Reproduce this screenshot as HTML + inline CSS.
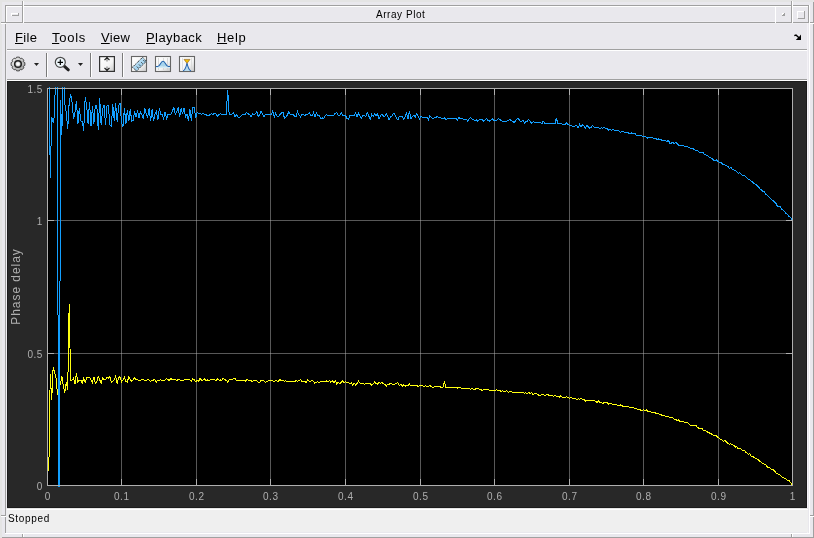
<!DOCTYPE html>
<html><head><meta charset="utf-8"><style>
html,body{margin:0;padding:0;-webkit-font-smoothing:antialiased;width:814px;height:538px;overflow:hidden;background:#e4e4e4;}
.mi{position:absolute;top:29px;height:18px;font:13px 'Liberation Sans',sans-serif;color:#000;line-height:18px;white-space:nowrap;}
.u{text-decoration:underline;}
div,svg{will-change:transform;}
</style></head><body>
<div style="position:absolute;left:2px;top:2px;width:812px;height:536px;background:#e9e8ed;"></div>
<div style="position:absolute;left:813px;top:2px;width:1px;height:536px;background:#a0a0a0;"></div>
<div style="position:absolute;left:2px;top:537px;width:812px;height:1px;background:#a0a0a0;"></div>
<div style="position:absolute;left:5px;top:5px;width:804px;height:1px;background:#a0a0a0;"></div>
<div style="position:absolute;left:5px;top:5px;width:1px;height:529px;background:#a0a0a0;"></div>
<div style="position:absolute;left:6px;top:6px;width:802px;height:1px;background:#ffffff;"></div>
<div style="position:absolute;left:6px;top:6px;width:1px;height:17px;background:#ffffff;"></div>
<div style="position:absolute;left:6px;top:23px;width:1px;height:510px;background:#eeedf1;"></div>
<div style="position:absolute;left:809px;top:5px;width:1px;height:529px;background:#ffffff;"></div>
<div style="position:absolute;left:5px;top:533px;width:805px;height:1px;background:#ffffff;"></div>
<div style="position:absolute;left:808px;top:6px;width:1px;height:17px;background:#a0a0a0;"></div>
<div style="position:absolute;left:5px;top:22px;width:804px;height:1px;background:#a0a0a0;"></div>
<div style="position:absolute;left:7px;top:23px;width:801px;height:1px;background:#eeedf1;"></div>
<div style="position:absolute;left:7px;top:21px;width:768px;height:1px;background:#eeedf1;"></div>
<div style="position:absolute;left:807px;top:23px;width:1px;height:510px;background:#f4f2f7;"></div>
<div style="position:absolute;left:1px;top:22px;width:5px;height:1px;background:#a0a0a0;"></div>
<div style="position:absolute;left:1px;top:23px;width:5px;height:1px;background:#ffffff;"></div>
<div style="position:absolute;left:22px;top:1px;width:1px;height:22px;background:#a0a0a0;"></div>
<div style="position:absolute;left:23px;top:1px;width:1px;height:22px;background:#ffffff;"></div>
<div style="position:absolute;left:791px;top:1px;width:1px;height:22px;background:#a0a0a0;"></div>
<div style="position:absolute;left:792px;top:1px;width:1px;height:22px;background:#ffffff;"></div>
<div style="position:absolute;left:1px;top:515px;width:5px;height:1px;background:#a0a0a0;"></div>
<div style="position:absolute;left:1px;top:516px;width:5px;height:1px;background:#ffffff;"></div>
<div style="position:absolute;left:810px;top:515px;width:4px;height:1px;background:#a0a0a0;"></div>
<div style="position:absolute;left:810px;top:516px;width:4px;height:1px;background:#ffffff;"></div>
<div style="position:absolute;left:22px;top:534px;width:1px;height:4px;background:#a0a0a0;"></div>
<div style="position:absolute;left:23px;top:534px;width:1px;height:3px;background:#ffffff;"></div>
<div style="position:absolute;left:791px;top:534px;width:1px;height:4px;background:#a0a0a0;"></div>
<div style="position:absolute;left:792px;top:534px;width:1px;height:3px;background:#ffffff;"></div>
<div style="position:absolute;left:810px;top:22px;width:4px;height:1px;background:#a0a0a0;"></div>
<div style="position:absolute;left:810px;top:23px;width:4px;height:1px;background:#ffffff;"></div>
<div style="position:absolute;left:775px;top:6px;width:1px;height:17px;background:#ffffff;"></div>
<div style="position:absolute;left:11px;top:13px;width:7px;height:1px;background:#ffffff;"></div>
<div style="position:absolute;left:11px;top:13px;width:1px;height:3px;background:#ffffff;"></div>
<div style="position:absolute;left:12px;top:15px;width:7px;height:1px;background:#a0a0a0;"></div>
<div style="position:absolute;left:18px;top:13px;width:1px;height:3px;background:#a0a0a0;"></div>
<div style="position:absolute;left:782px;top:13px;width:2px;height:1px;background:#ffffff;"></div>
<div style="position:absolute;left:782px;top:13px;width:1px;height:2px;background:#ffffff;"></div>
<div style="position:absolute;left:783px;top:14px;width:1px;height:1px;background:#a0a0a0;"></div>
<div style="position:absolute;left:782px;top:15px;width:2px;height:1px;background:#a0a0a0;"></div>
<div style="position:absolute;left:784px;top:13px;width:1px;height:3px;background:#a0a0a0;"></div>
<div style="position:absolute;left:797px;top:11px;width:7px;height:1px;background:#ffffff;"></div>
<div style="position:absolute;left:797px;top:11px;width:1px;height:7px;background:#ffffff;"></div>
<div style="position:absolute;left:798px;top:18px;width:7px;height:1px;background:#a0a0a0;"></div>
<div style="position:absolute;left:804px;top:11px;width:1px;height:8px;background:#a0a0a0;"></div>
<div style="position:absolute;left:376px;top:5.5px;font:10px 'Liberation Sans',sans-serif;color:#000;line-height:17px;letter-spacing:0.55px;white-space:nowrap">Array Plot</div>
<div style="position:absolute;left:7px;top:49px;width:800px;height:1px;background:#a0a0a0;"></div>
<div style="position:absolute;left:7px;top:50px;width:800px;height:1px;background:#ffffff;"></div>
<div style="position:absolute;left:7px;top:79px;width:800px;height:1px;background:#a0a0a0;"></div>
<div style="position:absolute;left:7px;top:80px;width:800px;height:1px;background:#ffffff;"></div>
<div class="mi" style="left:15px;letter-spacing:0.3px"><span class="u">F</span>ile</div>
<div class="mi" style="left:52px;letter-spacing:0.75px"><span class="u">T</span>ools</div>
<div class="mi" style="left:101px;letter-spacing:0.3px"><span class="u">V</span>iew</div>
<div class="mi" style="left:146px;letter-spacing:0.43px"><span class="u">P</span>layback</div>
<div class="mi" style="left:217px;letter-spacing:0.67px"><span class="u">H</span>elp</div>
<div style="position:absolute;left:7px;top:81px;width:800px;height:427px;background:#1c1c1c;"></div>
<div style="position:absolute;left:8px;top:82px;width:798px;height:425px;background:#282828;"></div>
<div style="position:absolute;left:7px;top:508px;width:801px;height:1px;background:#e4e4e4;"></div>
<div style="position:absolute;left:7px;top:509px;width:801px;height:1px;background:#ffffff;"></div>
<div style="position:absolute;left:7px;top:510px;width:801px;height:22px;background:#efefef;"></div>
<div style="position:absolute;left:8.4px;top:511.5px;font:10px 'Liberation Sans',sans-serif;color:#000;letter-spacing:0.68px;line-height:14px;white-space:nowrap">Stopped</div>
<div style="position:absolute;left:46px;top:53px;width:1px;height:24px;background:#7a7a7a;"></div>
<div style="position:absolute;left:47px;top:53px;width:1px;height:24px;background:#ffffff;"></div>
<div style="position:absolute;left:90px;top:53px;width:1px;height:24px;background:#7a7a7a;"></div>
<div style="position:absolute;left:91px;top:53px;width:1px;height:24px;background:#ffffff;"></div>
<div style="position:absolute;left:122px;top:53px;width:1px;height:24px;background:#7a7a7a;"></div>
<div style="position:absolute;left:123px;top:53px;width:1px;height:24px;background:#ffffff;"></div>

<svg width="814" height="538" style="position:absolute;left:0;top:0">
<defs>
<linearGradient id="gg" x1="0" y1="0" x2="1" y2="1"><stop offset="0" stop-color="#f4f4f4"/><stop offset="1" stop-color="#9a9a9a"/></linearGradient>
<linearGradient id="bx" x1="0" y1="0" x2="1" y2="1"><stop offset="0" stop-color="#ffffff"/><stop offset="0.6" stop-color="#f4f4f4"/><stop offset="1" stop-color="#c8c8c8"/></linearGradient>
<linearGradient id="bl" x1="0" y1="0" x2="1" y2="1"><stop offset="0" stop-color="#d8eef8"/><stop offset="1" stop-color="#7fbfe6"/></linearGradient>
</defs>
<path d="M794.3,35.6 L796,35 L799.5,38.3" fill="none" stroke="#000" stroke-width="1.5"/><path d="M801,34.6 L801,40 L795.8,40 L797.5,38.3 L799.4,36.4 Z" fill="#000"/>
<!-- gear -->
<g transform="translate(18,64)">
<path d="M-2.08,-5.52 L-1.39,-6.86 L1.39,-6.86 L2.08,-5.52 L2.43,-5.37 L3.87,-5.83 L5.83,-3.87 L5.37,-2.43 L5.52,-2.08 L6.86,-1.39 L6.86,1.39 L5.52,2.08 L5.37,2.43 L5.83,3.87 L3.87,5.83 L2.43,5.37 L2.08,5.52 L1.39,6.86 L-1.39,6.86 L-2.08,5.52 L-2.43,5.37 L-3.87,5.83 L-5.83,3.87 L-5.37,2.43 L-5.52,2.08 L-6.86,1.39 L-6.86,-1.39 L-5.52,-2.08 L-5.37,-2.43 L-5.83,-3.87 L-3.87,-5.83 L-2.43,-5.37 Z" fill="url(#gg)" stroke="#3a3a3a" stroke-width="0.9"/>
<circle r="3.3" fill="none" stroke="#222" stroke-width="1.5"/>
<circle r="1.8" fill="#fff"/>
</g>
<path d="M34,63 L39,63 L36.5,66 Z" fill="#222"/>
<!-- zoom -->
<line x1="64.2" y1="66.2" x2="68.3" y2="69.8" stroke="#222" stroke-width="3" stroke-linecap="round"/>
<circle cx="60.3" cy="62.3" r="5" fill="#f0f8fc" stroke="#4a4a4a" stroke-width="1.2"/>
<path d="M57.6,62.3 H63 M60.3,59.6 V65" stroke="#000" stroke-width="1.2"/>
<path d="M78,63 L83,63 L80.5,66 Z" fill="#222"/>
<!-- autoscale -->
<rect x="99.6" y="56.6" width="14.8" height="14.8" fill="url(#bx)" stroke="#333" stroke-width="1.2"/>
<path d="M104.5,60 L107,57.8 L109.5,60" fill="none" stroke="#222" stroke-width="1.2"/>
<path d="M107,57 V59" stroke="#222" stroke-width="1.2"/><path d="M107,59 V61.5" stroke="#888" stroke-width="1.2"/>
<path d="M104.5,68 L107,70.2 L109.5,68" fill="none" stroke="#222" stroke-width="1.2"/>
<path d="M107,69 V71" stroke="#222" stroke-width="1.2"/><path d="M107,66.5 V69" stroke="#888" stroke-width="1.2"/>
<!-- ruler -->
<rect x="131.5" y="56.5" width="15" height="15" fill="url(#bx)" stroke="#666" stroke-width="1.1"/>
<path d="M132.5,67.2 L142.6,57.3 L146.4,61.2 L136.5,71 Z" fill="url(#bl)" stroke="#111" stroke-width="1" stroke-dasharray="1.1,0.9"/><path d="M139,64.5 L140.3,65.8 M141.3,62.3 L142.6,63.6 M136.9,66.6 L138.2,67.9 M143.4,60.2 L144.7,61.5" stroke="#222" stroke-width="0.9"/>
<!-- bell -->
<rect x="155.5" y="56.5" width="15" height="15" fill="url(#bx)" stroke="#666" stroke-width="1.1"/>
<path d="M158.5,58 V70 M163.5,58 V70 M167.5,58 V70" stroke="#d0d0d0" stroke-width="0.8"/>
<rect x="156" y="66.5" width="14" height="1.5" fill="#d4ebf6"/>
<path d="M156,66.5 L157.6,66.5 C160,66.5 160.6,61.3 163,61.3 C165.4,61.3 166,66.5 168.4,66.5 L170,66.5 Z" fill="#a8d4ec"/>
<path d="M156,66.5 L157.6,66.5 C160,66.5 160.6,61.3 163,61.3 C165.4,61.3 166,66.5 168.4,66.5 L170,66.5" fill="none" stroke="#2262ad" stroke-width="1.1"/>
<!-- peak -->
<rect x="179.5" y="56.5" width="15" height="15" fill="url(#bx)" stroke="#666" stroke-width="1.1"/>
<path d="M182.5,58 V70 M191.5,58 V70" stroke="#d8d8d8" stroke-width="0.8"/>
<path d="M187,63 C186,68 185,70 183,71 L191,71 C189,70 188,68 187,63 Z" fill="#b8dcee"/>
<path d="M187,63 C186,68 185,70 183,71 M187,63 C188,68 189,70 191,71" fill="none" stroke="#2a66b0" stroke-width="1.1"/>
<path d="M184,59.4 L190,59.4 L187,63.3 Z" fill="#f2c000" stroke="#9a6a2a" stroke-width="0.7"/>
</svg>

<svg width="814" height="538" style="position:absolute;left:0;top:0"><defs><clipPath id="ax"><rect x="47" y="87" width="746" height="400"/></clipPath></defs><rect x="47" y="88" width="746" height="398" fill="#000"/><path d="M121.5,89 V485 M196.5,89 V485 M270.5,89 V485 M345.5,89 V485 M420.5,89 V485 M494.5,89 V485 M569.5,89 V485 M643.5,89 V485 M718.5,89 V485" stroke="#afafaf" stroke-opacity="0.5" stroke-width="1" shape-rendering="crispEdges"/><path d="M48,353.5 H792 M48,220.5 H792" stroke="#afafaf" stroke-opacity="0.5" stroke-width="1" shape-rendering="crispEdges"/><path d="M121.5,479 V485 M121.5,89 V95 M196.5,479 V485 M196.5,89 V95 M270.5,479 V485 M270.5,89 V95 M345.5,479 V485 M345.5,89 V95 M420.5,479 V485 M420.5,89 V95 M494.5,479 V485 M494.5,89 V95 M569.5,479 V485 M569.5,89 V95 M643.5,479 V485 M643.5,89 V95 M718.5,479 V485 M718.5,89 V95 M48,353.5 H54 M786,353.5 H792 M48,220.5 H54 M786,220.5 H792" stroke="#afafaf" stroke-width="1" shape-rendering="crispEdges"/><g clip-path="url(#ax)" fill="none" stroke-width="1" shape-rendering="crispEdges"><polyline points="48.80,471.0 50.25,374.0 51.71,400.0 53.16,367.0 54.62,373.0 56.07,378.0 57.53,395.0 58.98,384.0 60.44,384.0 61.89,376.0 63.34,386.0 64.80,393.0 66.25,382.0 67.71,390.0 69.16,304.0 70.62,380.0 72.07,380.0 73.52,378.0 74.98,384.0 76.43,373.0 77.89,382.0 79.34,380.0 80.80,380.2 82.25,383.0 83.71,378.3 85.16,382.2 86.61,377.9 88.07,377.6 89.52,377.3 90.98,380.1 92.43,382.5 93.89,376.8 95.34,383.6 96.80,381.8 98.25,376.6 99.70,379.6 101.16,383.5 102.61,377.7 104.07,379.8 105.52,379.8 106.98,377.3 108.43,378.4 109.88,376.5 111.34,382.4 112.79,381.6 114.25,379.6 115.70,376.2 117.16,383.7 118.61,377.2 120.07,376.9 121.52,381.8 122.97,380.1 124.43,377.4 125.88,381.7 127.34,382.0 128.79,376.7 130.25,379.7 131.70,381.2 133.16,379.7 134.61,377.8 136.06,379.6 137.52,379.6 138.97,380.3 140.43,380.1 141.88,379.7 143.34,379.6 144.79,380.8 146.25,380.2 147.70,379.9 149.15,379.9 150.61,381.3 152.06,380.3 153.52,380.0 154.97,379.9 156.43,382.0 157.88,380.1 159.33,380.1 160.79,379.9 162.24,380.8 163.70,380.2 165.15,380.0 166.61,378.5 168.06,379.9 169.52,380.3 170.97,378.1 172.42,379.9 173.88,379.6 175.33,379.7 176.79,380.3 178.24,379.6 179.70,380.0 181.15,380.0 182.61,380.2 184.06,379.9 185.51,379.7 186.97,379.9 188.42,379.7 189.88,379.9 191.33,381.3 192.79,378.6 194.24,379.9 195.69,381.8 197.15,380.0 198.60,381.4 200.06,378.1 201.51,380.1 202.97,380.1 204.42,378.8 205.88,380.3 207.33,380.0 208.78,381.0 210.24,379.9 211.69,379.9 213.15,379.9 214.60,379.8 216.06,381.3 217.51,378.6 218.97,380.2 220.42,380.0 221.87,380.4 223.33,378.1 224.78,379.8 226.24,380.2 227.69,382.3 229.15,379.9 230.60,379.1 232.05,380.0 233.51,378.3 234.96,378.5 236.42,380.3 237.87,380.4 239.33,380.0 240.78,380.3 242.24,380.2 243.69,380.3 245.14,381.2 246.60,379.9 248.05,380.0 249.51,380.3 250.96,380.6 252.42,381.8 253.87,380.5 255.33,380.3 256.78,380.8 258.23,382.1 259.69,382.2 261.14,380.3 262.60,380.5 264.05,380.8 265.51,382.2 266.96,381.8 268.41,380.6 269.87,380.3 271.32,380.5 272.78,380.9 274.23,382.0 275.69,380.5 277.14,381.1 278.60,381.0 280.05,379.6 281.50,380.9 282.96,380.5 284.41,381.2 285.87,380.6 287.32,382.0 288.78,381.1 290.23,381.2 291.69,381.1 293.14,381.2 294.59,381.2 296.05,380.9 297.50,381.2 298.96,380.9 300.41,379.4 301.87,381.4 303.32,381.6 304.77,381.4 306.23,382.8 307.68,379.8 309.14,381.2 310.59,381.2 312.05,380.0 313.50,381.6 314.96,383.3 316.41,382.1 317.86,381.7 319.32,382.9 320.77,381.1 322.23,381.6 323.68,381.6 325.14,381.7 326.59,380.9 328.05,381.8 329.50,380.4 330.95,382.4 332.41,380.5 333.86,382.6 335.32,380.5 336.77,384.1 338.23,382.1 339.68,383.5 341.14,382.5 342.59,381.0 344.04,382.8 345.50,381.4 346.95,382.8 348.41,382.7 349.86,383.2 351.32,382.9 352.77,385.1 354.22,383.2 355.68,385.2 357.13,383.2 358.59,381.1 360.04,383.3 361.50,383.5 362.95,383.1 364.41,384.7 365.86,383.6 367.31,383.1 368.77,383.7 370.22,383.6 371.68,385.5 373.13,384.0 374.59,382.1 376.04,383.5 377.50,384.1 378.95,382.1 380.40,383.7 381.86,382.1 383.31,383.7 384.77,384.3 386.22,386.2 387.68,384.2 389.13,384.3 390.58,383.2 392.04,384.2 393.49,384.3 394.95,384.1 396.40,383.2 397.86,382.6 399.31,385.8 400.77,384.2 402.22,386.7 403.67,384.8 405.13,386.2 406.58,385.1 408.04,385.3 409.49,384.0 410.95,386.0 412.40,385.5 413.86,385.7 415.31,385.1 416.76,385.4 418.22,386.7 419.67,385.8 421.13,385.9 422.58,385.8 424.04,387.1 425.49,385.4 426.94,386.5 428.40,386.5 429.85,385.3 431.31,386.8 432.76,387.5 434.22,386.7 435.67,386.7 437.13,386.4 438.58,386.6 440.03,386.4 441.49,387.9 442.94,387.7 444.40,381.0 445.85,387.6 447.31,387.1 448.76,387.1 450.22,387.8 451.67,387.6 453.12,388.0 454.58,387.9 456.03,387.4 457.49,388.0 458.94,387.4 460.40,387.9 461.85,388.5 463.30,388.1 464.76,388.3 466.21,388.2 467.67,388.3 469.12,388.8 470.58,389.4 472.03,388.7 473.49,389.4 474.94,389.4 476.39,388.1 477.85,388.6 479.30,389.0 480.76,389.4 482.21,390.7 483.67,389.5 485.12,390.1 486.58,389.4 488.03,389.1 489.48,390.6 490.94,390.3 492.39,390.1 493.85,390.7 495.30,390.7 496.76,389.7 498.21,391.0 499.66,390.3 501.12,391.4 502.57,390.8 504.03,391.3 505.48,391.2 506.94,390.8 508.39,392.5 509.85,391.0 511.30,391.6 512.75,392.3 514.21,392.0 515.66,392.2 517.12,392.0 518.57,392.9 520.03,392.6 521.48,392.8 522.94,392.3 524.39,393.6 525.84,392.7 527.30,393.8 528.75,392.5 530.21,393.7 531.66,392.7 533.12,394.6 534.57,393.7 536.03,393.5 537.48,394.5 538.93,395.3 540.39,395.6 541.84,394.5 543.30,394.8 544.75,395.2 546.21,394.9 547.66,394.4 549.11,395.6 550.57,395.8 552.02,395.3 553.48,396.2 554.93,395.8 556.39,396.2 557.84,396.3 559.30,397.3 560.75,395.5 562.20,397.2 563.66,397.2 565.11,397.5 566.57,396.7 568.02,397.4 569.48,398.1 570.93,397.7 572.39,398.1 573.84,398.1 575.29,398.6 576.75,399.9 578.20,398.7 579.66,399.1 581.11,398.8 582.57,399.4 584.02,399.5 585.47,401.0 586.93,400.2 588.38,400.1 589.84,400.5 591.29,400.8 592.75,400.8 594.20,400.3 595.66,401.4 597.11,402.7 598.56,401.0 600.02,402.4 601.47,402.5 602.93,403.6 604.38,402.4 605.84,402.9 607.29,402.9 608.75,404.4 610.20,403.0 611.65,404.0 613.11,404.4 614.56,404.6 616.02,404.9 617.47,405.1 618.93,405.5 620.38,405.0 621.83,405.8 623.29,406.3 624.74,406.2 626.20,406.8 627.65,406.7 629.11,407.0 630.56,407.2 632.02,407.7 633.47,407.8 634.92,408.5 636.38,408.5 637.83,409.4 639.29,409.2 640.74,410.2 642.20,410.1 643.65,409.9 645.11,410.8 646.56,410.0 648.01,411.5 649.47,411.6 650.92,411.9 652.38,412.4 653.83,412.6 655.29,412.9 656.74,413.6 658.19,413.6 659.65,414.2 661.10,414.8 662.56,415.5 664.01,415.5 665.47,416.4 666.92,416.5 668.38,416.7 669.83,417.8 671.28,417.9 672.74,417.4 674.19,419.2 675.65,419.2 677.10,420.6 678.56,420.0 680.01,421.7 681.47,421.7 682.92,421.4 684.37,422.5 685.83,423.0 687.28,422.2 688.74,424.0 690.19,425.2 691.65,425.0 693.10,425.8 694.55,425.9 696.01,425.6 697.46,427.8 698.92,428.1 700.37,428.8 701.83,428.2 703.28,430.1 704.74,430.4 706.19,431.1 707.64,432.2 709.10,432.9 710.55,433.3 712.01,434.5 713.46,435.2 714.92,435.8 716.37,435.7 717.83,437.8 719.28,438.1 720.73,439.4 722.19,440.1 723.64,441.5 725.10,440.1 726.55,442.2 728.01,443.4 729.46,444.1 730.92,443.9 732.37,444.8 733.82,445.3 735.28,447.1 736.73,446.6 738.19,448.9 739.64,448.5 741.10,449.2 742.55,450.7 744.00,450.1 745.46,451.8 746.91,453.1 748.37,454.2 749.82,453.9 751.28,456.1 752.73,456.3 754.19,457.5 755.64,458.2 757.09,459.1 758.55,460.0 760.00,461.4 761.46,462.5 762.91,463.4 764.37,464.2 765.82,465.0 767.28,467.0 768.73,467.0 770.18,468.3 771.64,469.2 773.09,469.8 774.55,470.8 776.00,472.8 777.46,473.8 778.91,474.3 780.36,475.2 781.82,476.8 783.27,477.6 784.73,478.9 786.18,479.0 787.64,480.5 789.09,480.8 790.55,482.4 792.00,484.4" stroke="#ffff11"/><polyline points="48.80,40.0 50.25,178.0 51.71,117.0 53.16,123.0 54.62,115.0 56.07,40.0 57.53,110.0 58.98,725.0 60.44,100.0 61.89,135.0 63.34,40.0 64.80,104.0 66.25,112.0 67.71,129.0 69.16,103.0 70.62,94.0 72.07,102.0 73.52,119.0 74.98,112.0 76.43,100.9 77.89,124.0 79.34,107.7 80.80,121.0 82.25,121.4 83.71,130.5 85.16,97.4 86.61,105.0 88.07,123.5 89.52,101.8 90.98,126.2 92.43,106.0 93.89,123.7 95.34,105.0 96.80,105.6 98.25,129.9 99.70,97.6 101.16,125.3 102.61,109.5 104.07,105.0 105.52,124.8 106.98,106.0 108.43,105.9 109.88,124.9 111.34,126.0 112.79,104.3 114.25,120.5 115.70,103.4 117.16,122.3 118.61,106.2 120.07,103.0 121.52,122.6 122.97,127.1 124.43,108.0 125.88,124.0 127.34,110.1 128.79,121.3 130.25,109.2 131.70,121.0 133.16,120.5 134.61,111.5 136.06,117.2 137.52,110.4 138.97,117.6 140.43,111.9 141.88,114.5 143.34,118.4 144.79,108.1 146.25,114.3 147.70,117.3 149.15,108.1 150.61,121.1 152.06,109.4 153.52,121.2 154.97,114.4 156.43,111.1 157.88,120.3 159.33,108.1 160.79,114.5 162.24,114.5 163.70,119.0 165.15,111.6 166.61,119.8 168.06,114.1 169.52,114.5 170.97,114.0 172.42,110.8 173.88,107.6 175.33,114.1 176.79,111.2 178.24,108.1 179.70,117.3 181.15,108.0 182.61,114.0 184.06,108.3 185.51,117.2 186.97,114.3 188.42,120.9 189.88,109.1 191.33,120.9 192.79,107.3 194.24,107.8 195.69,117.8 197.15,112.1 198.60,113.7 200.06,113.9 201.51,114.1 202.97,113.9 204.42,114.0 205.88,114.0 207.33,115.7 208.78,115.7 210.24,114.2 211.69,113.9 213.15,114.1 214.60,113.7 216.06,113.8 217.51,116.5 218.97,114.3 220.42,114.0 221.87,114.1 223.33,114.2 224.78,114.1 226.24,114.5 227.69,90.0 229.15,113.9 230.60,114.5 232.05,113.9 233.51,112.7 234.96,117.0 236.42,114.5 237.87,117.0 239.33,117.7 240.78,116.4 242.24,114.6 243.69,114.0 245.14,114.3 246.60,112.3 248.05,113.9 249.51,114.3 250.96,117.0 252.42,114.0 253.87,114.6 255.33,114.0 256.78,111.3 258.23,116.6 259.69,114.7 261.14,111.0 262.60,114.6 264.05,117.3 265.51,114.1 266.96,114.6 268.41,114.2 269.87,114.2 271.32,114.5 272.78,111.1 274.23,117.0 275.69,112.9 277.14,116.6 278.60,116.5 280.05,114.3 281.50,112.8 282.96,112.1 284.41,118.1 285.87,116.9 287.32,115.0 288.78,111.8 290.23,114.6 291.69,114.9 293.14,114.7 294.59,116.3 296.05,116.7 297.50,111.6 298.96,115.0 300.41,116.8 301.87,114.6 303.32,114.7 304.77,115.3 306.23,114.7 307.68,114.8 309.14,112.8 310.59,115.0 312.05,116.3 313.50,112.8 314.96,117.0 316.41,112.6 317.86,115.2 319.32,115.4 320.77,118.7 322.23,117.9 323.68,118.5 325.14,115.4 326.59,114.9 328.05,115.2 329.50,115.5 330.95,115.4 332.41,115.5 333.86,115.1 335.32,113.2 336.77,112.8 338.23,115.5 339.68,115.4 341.14,112.4 342.59,115.5 344.04,115.1 345.50,115.3 346.95,118.5 348.41,119.1 349.86,115.5 351.32,115.8 352.77,115.7 354.22,115.3 355.68,112.7 357.13,117.0 358.59,112.9 360.04,115.9 361.50,118.2 362.95,115.5 364.41,115.6 365.86,116.3 367.31,112.8 368.77,115.9 370.22,119.5 371.68,114.4 373.13,116.4 374.59,113.6 376.04,116.3 377.50,113.8 378.95,118.6 380.40,116.0 381.86,114.2 383.31,115.9 384.77,116.6 386.22,113.4 387.68,116.2 389.13,120.0 390.58,116.3 392.04,116.2 393.49,113.2 394.95,114.6 396.40,118.2 397.86,119.8 399.31,116.6 400.77,116.9 402.22,116.7 403.67,118.9 405.13,116.7 406.58,113.2 408.04,118.7 409.49,110.8 410.95,118.7 412.40,116.7 413.86,115.1 415.31,116.9 416.76,113.3 418.22,116.7 419.67,119.0 421.13,115.9 422.58,117.4 424.04,117.1 425.49,117.2 426.94,117.1 428.40,119.5 429.85,115.7 431.31,117.2 432.76,118.9 434.22,117.9 435.67,118.0 437.13,115.9 438.58,117.8 440.03,117.5 441.49,118.3 442.94,118.3 444.40,117.9 445.85,119.7 447.31,118.6 448.76,118.4 450.22,118.3 451.67,118.1 453.12,118.3 454.58,118.7 456.03,118.4 457.49,120.5 458.94,117.3 460.40,118.8 461.85,118.2 463.30,119.0 464.76,119.2 466.21,119.1 467.67,121.3 469.12,119.1 470.58,117.6 472.03,119.2 473.49,119.8 474.94,120.8 476.39,119.7 477.85,121.5 479.30,119.5 480.76,119.6 482.21,119.6 483.67,121.1 485.12,119.9 486.58,118.6 488.03,120.4 489.48,121.2 490.94,119.9 492.39,118.9 493.85,120.6 495.30,120.7 496.76,120.3 498.21,118.6 499.66,119.2 501.12,120.4 502.57,121.8 504.03,121.0 505.48,121.7 506.94,121.0 508.39,120.7 509.85,119.5 511.30,120.6 512.75,121.2 514.21,122.9 515.66,120.6 517.12,118.9 518.57,119.0 520.03,121.0 521.48,121.3 522.94,120.0 524.39,123.2 525.84,121.5 527.30,121.1 528.75,119.4 530.21,121.6 531.66,123.2 533.12,121.6 534.57,122.2 536.03,122.3 537.48,122.1 538.93,122.2 540.39,122.1 541.84,123.7 543.30,121.1 544.75,123.2 546.21,123.3 547.66,123.9 549.11,123.3 550.57,123.1 552.02,123.5 553.48,123.7 554.93,123.8 556.39,118.0 557.84,123.8 559.30,123.8 560.75,123.2 562.20,124.4 563.66,124.4 565.11,124.6 566.57,123.1 568.02,124.6 569.48,125.3 570.93,125.5 572.39,126.2 573.84,127.0 575.29,125.5 576.75,125.7 578.20,127.9 579.66,124.3 581.11,127.0 582.57,124.6 584.02,126.1 585.47,128.2 586.93,125.5 588.38,126.8 589.84,128.2 591.29,127.1 592.75,125.4 594.20,127.1 595.66,127.8 597.11,127.7 598.56,127.7 600.02,128.4 601.47,127.9 602.93,128.1 604.38,127.7 605.84,128.7 607.29,128.9 608.75,130.1 610.20,129.7 611.65,130.4 613.11,129.6 614.56,130.2 616.02,130.1 617.47,131.0 618.93,130.8 620.38,132.6 621.83,131.2 623.29,131.8 624.74,132.3 626.20,132.2 627.65,132.6 629.11,133.4 630.56,133.2 632.02,132.9 633.47,133.8 634.92,133.2 636.38,135.8 637.83,135.6 639.29,135.4 640.74,135.5 642.20,136.0 643.65,136.4 645.11,136.5 646.56,137.7 648.01,138.2 649.47,137.2 650.92,137.4 652.38,137.5 653.83,138.3 655.29,138.1 656.74,139.2 658.19,138.9 659.65,139.5 661.10,139.6 662.56,140.7 664.01,140.9 665.47,140.1 666.92,141.7 668.38,140.4 669.83,143.1 671.28,143.1 672.74,142.4 674.19,143.4 675.65,142.5 677.10,143.4 678.56,145.4 680.01,144.9 681.47,145.5 682.92,145.5 684.37,146.1 685.83,146.3 687.28,146.4 688.74,147.4 690.19,148.0 691.65,148.8 693.10,148.8 694.55,149.5 696.01,150.7 697.46,150.7 698.92,152.0 700.37,152.5 701.83,152.7 703.28,152.8 704.74,154.6 706.19,155.1 707.64,155.6 709.10,157.4 710.55,157.5 712.01,158.5 713.46,160.1 714.92,160.7 716.37,159.8 717.83,161.7 719.28,162.1 720.73,162.1 722.19,163.8 723.64,164.8 725.10,165.0 726.55,165.6 728.01,166.6 729.46,168.5 730.92,166.9 732.37,169.9 733.82,169.9 735.28,170.3 736.73,171.3 738.19,173.4 739.64,172.8 741.10,174.3 742.55,175.2 744.00,175.7 745.46,176.4 746.91,178.1 748.37,179.2 749.82,179.7 751.28,181.0 752.73,182.2 754.19,183.5 755.64,184.4 757.09,185.5 758.55,187.0 760.00,188.9 761.46,189.8 762.91,191.2 764.37,191.7 765.82,194.2 767.28,195.5 768.73,197.0 770.18,198.2 771.64,199.7 773.09,200.8 774.55,202.1 776.00,203.5 777.46,206.4 778.91,206.2 780.36,206.9 781.82,209.5 783.27,210.3 784.73,212.0 786.18,213.7 787.64,214.5 789.09,216.6 790.55,217.3 792.00,219.5" stroke="#139fff"/></g><rect x="47.5" y="88.5" width="745" height="397" fill="none" stroke="#afafaf" stroke-width="1" shape-rendering="crispEdges"/><g fill="#afafaf" style="font-family:'Liberation Sans',sans-serif;font-size:10px;letter-spacing:0.5px"><text x="42.8" y="490" text-anchor="end">0</text><text x="42.8" y="358" text-anchor="end">0.5</text><text x="42.8" y="225" text-anchor="end">1</text><text x="42.8" y="93" text-anchor="end">1.5</text><text x="47.75" y="500" text-anchor="middle">0</text><text x="121.75" y="500" text-anchor="middle">0.1</text><text x="196.75" y="500" text-anchor="middle">0.2</text><text x="270.75" y="500" text-anchor="middle">0.3</text><text x="345.75" y="500" text-anchor="middle">0.4</text><text x="420.75" y="500" text-anchor="middle">0.5</text><text x="494.75" y="500" text-anchor="middle">0.6</text><text x="569.75" y="500" text-anchor="middle">0.7</text><text x="643.75" y="500" text-anchor="middle">0.8</text><text x="718.75" y="500" text-anchor="middle">0.9</text><text x="792.75" y="500" text-anchor="middle">1</text><text transform="translate(19.5,286.5) rotate(-90)" text-anchor="middle" style="font-size:12px;letter-spacing:0.95px">Phase delay</text></g></svg>
</body></html>
